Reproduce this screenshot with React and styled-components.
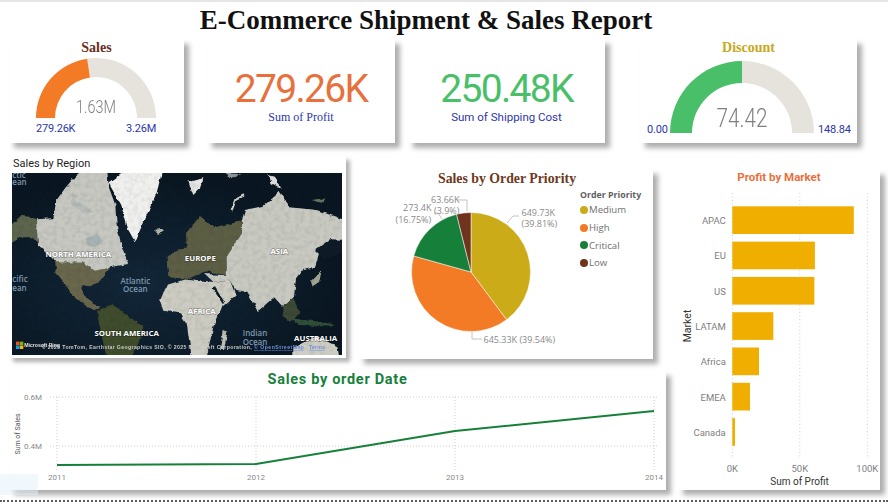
import React from 'react';
import styled, { createGlobalStyle } from 'styled-components';

const GlobalStyle = createGlobalStyle`
  html, body {
    margin: 0;
    padding: 0;
    background: #ffffff;
  }
`;

const din = `"Roboto", "Liberation Sans", sans-serif`;
const serif = `"Liberation Serif", "DejaVu Serif", serif`;

const Page = styled.div`
  width: 888px;
  height: 504px;
  box-sizing: border-box;
  overflow: hidden;
  position: relative;
  display: flex;
  flex-direction: column;
  background: #ffffff;
  border-top: 2px solid #e6e6e6;
`;

const Title = styled.h1`
  margin: 0;
  height: 37px;
  width: 852px;
  text-align: center;
  font-family: ${serif};
  font-size: 27px;
  font-weight: 700;
  line-height: 36px;
  color: #111111;
  white-space: nowrap;
`;

const KpiRow = styled.div`
  display: flex;
  height: 104px;
  padding-left: 9px;
`;

const Card = styled.div`
  background: #ffffff;
  box-shadow: 5px 5px 5px rgba(0, 0, 0, 0.32);
  box-sizing: border-box;
`;

const GaugeCard = styled(Card)`
  position: relative;
  width: ${(p) => p.$width}px;
  margin-left: ${(p) => p.$gap || 0}px;
  display: flex;
  flex-direction: column;
  align-items: center;
  text-align: center;
`;

const GaugeTitle = styled.div`
  font-family: ${serif};
  font-size: 14px;
  font-weight: 700;
  line-height: 16px;
  margin-top: 1px;
  color: ${(p) => p.$color};
`;

const GaugeBody = styled.div`
  position: relative;
  display: flex;
  justify-content: center;
  margin-top: ${(p) => p.$top}px;
  margin-right: ${(p) => p.$shift}px;
`;

const GaugeValue = styled.div`
  position: absolute;
  left: 0;
  right: 0;
  bottom: ${(p) => p.$bottom}px;
  font-family: ${din};
  font-weight: 300;
  font-size: ${(p) => p.$size}px;
  transform: scaleX(0.8);
  color: #7f7f7f;
`;

const GaugeEnd = styled.div`
  position: absolute;
  font-family: ${din};
  font-size: 11px;
  line-height: 12px;
  letter-spacing: -0.2px;
  color: #2b36ae;
  left: ${(p) => p.$left}px;
  top: ${(p) => p.$top}px;
  white-space: nowrap;
`;

const KpiCard = styled(Card)`
  width: ${(p) => p.$width}px;
  margin-left: ${(p) => p.$gap}px;
  display: flex;
  flex-direction: column;
  align-items: center;
  padding-top: 27px;
`;

const KpiValue = styled.div`
  font-family: ${din};
  font-size: 39px;
  line-height: 46px;
  letter-spacing: -1.7px;
  color: ${(p) => p.$color};
`;

const KpiLabel = styled.div`
  font-family: ${(p) => (p.$din ? din : serif)};
  font-size: ${(p) => (p.$din ? 11.5 : 12)}px;
  line-height: 14px;
  margin-top: -2px;
  color: #2b36ae;
`;

const Body = styled.div`
  display: flex;
  padding-left: 9px;
`;

const LeftColumn = styled.div`
  width: 657px;
  display: flex;
  flex-direction: column;
`;

const TopCharts = styled.div`
  display: flex;
  align-items: flex-start;
  height: 228px;
`;

const MapCard = styled(Card)`
  width: 337px;
  height: 202px;
  margin-top: 13px;
  padding: 0 4px 0 3px;
  box-shadow: 4px 4px 4px rgba(0, 0, 0, 0.3);
`;

const MapTitle = styled.div`
  height: 17px;
  padding-left: 1px;
  font-family: ${din};
  font-size: 11px;
  line-height: 15px;
  color: #252423;
`;

const MapFrame = styled.svg`
  display: block;
  width: 330px;
  height: 182px;
`;

const PieCard = styled(Card)`
  width: 294px;
  height: 190px;
  margin: 26px 0 0 13px;
`;

const PieTitle = styled.div`
  height: 22px;
  width: 296px;
  text-align: center;
  font-family: ${serif};
  font-size: 13.8px;
  font-weight: 700;
  line-height: 20px;
  color: #6e3820;
`;

const PieRow = styled.div`
  display: flex;
`;

const PieSvg = styled.svg`
  display: block;
  width: 217px;
  height: 168px;
`;

const Legend = styled.div`
  display: flex;
  flex-direction: column;
  margin: -2px 0 0 4px;
`;

const LegendTitle = styled.div`
  font-family: "Open Sans", sans-serif;
  font-size: 8.8px;
  font-weight: 700;
  line-height: 12px;
  color: #5f5f5f;
`;

const LegendItem = styled.div`
  display: flex;
  align-items: center;
  gap: 1px;
  height: 17.7px;
  font-family: "Open Sans", sans-serif;
  font-size: 9.6px;
  color: #6f6f6f;
`;

const LegendDot = styled.span`
  width: 8px;
  height: 8px;
  border-radius: 50%;
  background: ${(p) => p.$color};
`;

const LineCard = styled(Card)`
  height: 119px;
`;

const LineTitle = styled.div`
  text-align: center;
  font-family: ${din};
  font-weight: 700;
  font-size: 14.5px;
  letter-spacing: 0.7px;
  line-height: 17px;
  height: 17px;
  color: #16803a;
`;

const LineSvg = styled.svg`
  display: block;
  width: 657px;
  height: 102px;
`;

const BarCard = styled(Card)`
  width: 202px;
  height: 320px;
  margin: 27px 0 0 12px;
`;

const BarTitle = styled.div`
  text-align: center;
  font-family: ${din};
  font-weight: 700;
  font-size: 11.5px;
  line-height: 14px;
  height: 18px;
  color: #e8703c;
`;

const BarSvg = styled.svg`
  display: block;
  width: 202px;
  height: 302px;
`;

const DottedRule = styled.div`
  position: absolute;
  left: 0;
  right: 0;
  bottom: 2px;
  border-bottom: 2px dotted #5c5c5c;
`;

const CornerTint = styled.div`
  position: absolute;
  left: 0;
  top: 472px;
  width: 38px;
  height: 21px;
  background: rgba(225, 242, 250, 0.5);
`;

// half ring of a gauge, from fraction a to fraction b measured from the left end
const ring = (cx, cy, R, r, a, b) => {
  const pt = (rad, f) => [
    (cx - rad * Math.cos(Math.PI * f)).toFixed(2),
    (cy - rad * Math.sin(Math.PI * f)).toFixed(2),
  ];
  const [x1, y1] = pt(R, a);
  const [x2, y2] = pt(R, b);
  const [x3, y3] = pt(r, b);
  const [x4, y4] = pt(r, a);
  return `M${x1} ${y1}A${R} ${R} 0 0 1 ${x2} ${y2}L${x3} ${y3}A${r} ${r} 0 0 0 ${x4} ${y4}Z`;
};

const Gauge = ({ R, r, split, color }) => (
  <svg width={R * 2} height={R} viewBox={`0 0 ${R * 2} ${R}`} style={{ display: 'block' }}>
    <path d={ring(R, R, R, r, split, 1)} fill="#e6e2dc" />
    <path d={ring(R, R, R, r, 0, split)} fill={color} />
  </svg>
);

const WorldMap = () => (
  <MapFrame viewBox="36 69 990 546">
    <defs>
      {/* rough coastlines, then the soft look of a scaled map tile */}
      <filter id="coast" x="-5%" y="-5%" width="110%" height="110%" colorInterpolationFilters="sRGB">
        <feTurbulence type="fractalNoise" baseFrequency="0.05" numOctaves="3" seed="4" result="noise" />
        <feDisplacementMap in="SourceGraphic" in2="noise" scale="12" xChannelSelector="R" yChannelSelector="G" />
        <feGaussianBlur stdDeviation="1.8" />
      </filter>
      <filter id="mottle" x="0" y="0" width="100%" height="100%" colorInterpolationFilters="sRGB">
        <feTurbulence type="fractalNoise" baseFrequency="0.07" numOctaves="3" seed="11" />
        <feColorMatrix values="0 0 0 0 0  0 0 0 0 0  0 0 0 0 0  1.1 0 0 0 -0.42" />
        <feGaussianBlur stdDeviation="1.5" />
      </filter>
      <filter id="tiny" x="-2%" y="-20%" width="104%" height="140%">
        <feGaussianBlur stdDeviation="1" />
      </filter>
      <radialGradient id="sea" cx="40%" cy="62%" r="60%">
        <stop offset="0" stopColor="#132739" />
        <stop offset="0.5" stopColor="#0e1f2e" />
        <stop offset="1" stopColor="#0a1722" />
      </radialGradient>
    </defs>
    <rect x="36" y="69" width="990" height="546" fill="url(#sea)" />
    <g filter="url(#coast)">
      {/* Alaska */}
      <path d="M30 228L62 198L90 200L112 210V282L98 262L62 262L30 282Z" fill="#5d654e" />
      {/* USA, Mexico, Central America */}
      <path d="M165 335L250 338L285 360L335 348L315 372L300 392L272 412L250 405L243 412L252 435L280 462L302 470L285 482L250 462L215 432L190 395L170 370Z" fill="#69674c" />
      {/* Canada */}
      <path d="M108 208L160 205L170 150L195 115L228 76L245 64H322L326 110L346 165L350 225L364 285L384 342L330 352L285 362L250 338L170 337L114 287Z" fill="#c6c8c1" />
      <path d="M258 265L290 250L308 275L285 292L260 288Z" fill="#a9b2b3" />
      <path d="M215 130L235 138L228 152L258 168L280 188L258 195L232 175L210 160Z" fill="#b7bcb9" />
      {/* Greenland */}
      <path d="M326 100L372 66H486L470 128L440 195L405 275L385 240L364 165Z" fill="#f0f0ee" />
      <path d="M462 240L478 234L492 244L476 254Z" fill="#b3b5a6" />
      {/* Europe */}
      <path d="M505 382L500 322L530 300L560 295L558 250L600 198L640 232L726 214L726 250L680 320L680 376L620 364L562 386Z" fill="#5d5f45" />
      {/* Africa and Arabia */}
      <path d="M480 452L500 405L560 386L640 396L690 392L708 438L672 468L655 490L640 530L620 622H575L560 520L540 490L490 482Z" fill="#cdccc3" />
      <path d="M638 415L668 462L676 460L645 412Z" fill="#0f1f2c" />
      {/* Asia */}
      <path d="M726 214L735 180L790 168L840 125L870 172L950 180L1040 212V266L965 285L945 350L905 362L888 385L882 440L850 472L822 442L775 482L742 425L706 420L690 392L640 396L615 372L680 376L680 320L726 250Z" fill="#c8c9c0" />
      <path d="M945 300L990 268L1040 270V300L975 330Z" fill="#0f1c28" />
      <path d="M930 395L965 360L958 395L935 410Z" fill="#a5a896" />
      <path d="M850 470L880 445L900 490L870 515L845 495Z" fill="#3e4a35" />
      {/* Islands */}
      <path d="M870 505L960 515L1010 525L990 530L900 525Z" fill="#2f4f36" />
      <path d="M668 540L682 545L672 600L660 600Z" fill="#c2c1b6" />
      <path d="M880 595L950 558L1012 590L1018 622H880Z" fill="#cfcec4" />
      {/* South America */}
      <path d="M290 482L340 465L398 510L430 530L412 590L392 622H320L302 545Z" fill="#3f4d2c" />
      {/* Arctic */}
      <path d="M695 180L706 150L732 136" fill="none" stroke="#cfd2cc" strokeWidth="7" />
      <path d="M565 95L610 85L600 115L580 135Z" fill="#e6e6e4" />
      <path d="M670 70L725 72L690 85Z" fill="#90979a" />
      <path d="M805 75L825 80L842 115L815 100Z" fill="#d9dcdc" />
      <path d="M935 150L975 145L970 160Z" fill="#6b7260" />
    </g>
    <rect x="36" y="69" width="990" height="546" filter="url(#mottle)" opacity="0.14" />
    <g
      fontFamily='"Open Sans", sans-serif'
      fontWeight="700"
      fill="#ffffff"
      stroke="rgba(0, 0, 0, 0.28)"
      strokeWidth="4"
      paintOrder="stroke"
      textAnchor="middle"
      fontSize="23.5"
    >
      <text x="235" y="320">NORTH AMERICA</text>
      <text x="601" y="332">EUROPE</text>
      <text x="838" y="311">ASIA</text>
      <text x="605" y="491">AFRICA</text>
      <text x="380" y="557">SOUTH AMERICA</text>
      <text x="947" y="573">AUSTRALIA</text>
    </g>
    <g fontFamily='"Open Sans", sans-serif' fontWeight="600" fill="#7d97ad" textAnchor="middle" fontSize="24">
      <text x="406" y="401">Atlantic</text>
      <text x="406" y="426">Ocean</text>
      <text x="765" y="559">Indian</text>
      <text x="765" y="585">Ocean</text>
    </g>
    <g fontFamily='"Open Sans", sans-serif' fontWeight="600" fill="#7d97ad" fontSize="24">
      <text x="37" y="84">ctic</text>
      <text x="37" y="106">ean</text>
      <text x="37" y="397">cific</text>
      <text x="37" y="423">ean</text>
    </g>
    <rect x="48" y="575" width="10.5" height="10.5" fill="#f25022" />
    <rect x="59.5" y="575" width="10.5" height="10.5" fill="#7fba00" />
    <rect x="48" y="586.5" width="10.5" height="10.5" fill="#00a4ef" />
    <rect x="59.5" y="586.5" width="10.5" height="10.5" fill="#ffb900" />
    <g fontFamily='"Liberation Sans", sans-serif' fontSize="15.5" filter="url(#tiny)" fontWeight="700">
      <text x="73" y="590" fill="#e4e4e4" textLength="107">Microsoft Bing</text>
      <text x="125" y="597" fill="#c8c8c8" textLength="630">© 2025 TomTom, Earthstar Geographics SIO, © 2025 Microsoft Corporation,</text>
      <text x="762" y="597" fill="#6d8fdc" textLength="150" textDecoration="underline">© OpenStreetMap</text>
      <text x="927" y="597" fill="#6d8fdc" textLength="48" textDecoration="underline">Terms</text>
    </g>
  </MapFrame>
);

const slices = [
  { name: 'Medium', share: 39.81, color: '#ccab18' },
  { name: 'High', share: 39.54, color: '#f47b26' },
  { name: 'Critical', share: 16.75, color: '#16803a' },
  { name: 'Low', share: 3.9, color: '#6f341d' },
];

const PieChart = () => {
  const cx = 471;
  const cy = 272;
  const R = 59.5;
  let start = 0;
  const paths = slices.map((s) => {
    const end = start + s.share / 100;
    const p = (f) => [
      (cx + R * Math.sin(2 * Math.PI * f)).toFixed(2),
      (cy - R * Math.cos(2 * Math.PI * f)).toFixed(2),
    ];
    const [x1, y1] = p(start);
    const [x2, y2] = p(end);
    const large = end - start > 0.5 ? 1 : 0;
    start = end;
    return {
      color: s.color,
      d: `M${cx} ${cy}L${x1} ${y1}A${R} ${R} 0 ${large} 1 ${x2} ${y2}Z`,
    };
  });
  return (
    <PieSvg viewBox="359 191 217 168">
      {paths.map((p) => (
        <path key={p.color} d={p.d} fill={p.color} stroke="#ffffff" strokeWidth="0.5" />
      ))}
      <g fill="none" stroke="#b5b5b5" strokeWidth="0.8">
        <path d="M507 223L513 216H519" />
        <path d="M472 332V339H482" />
        <path d="M457 200H467V211" />
        <path d="M434 213H438L442 219" />
      </g>
      <g fontFamily='"Open Sans", sans-serif' fontSize="9" fill="#8a8a8a">
        <text x="521.5" y="216">649.73K</text>
        <text x="521.5" y="227">(39.81%)</text>
        <text x="483.5" y="343">645.33K (39.54%)</text>
        <text x="403" y="211">273.4K</text>
        <text x="395.5" y="223">(16.75%)</text>
        <text x="431" y="203">63.66K</text>
        <text x="434" y="214">(3.9%)</text>
      </g>
    </PieSvg>
  );
};

const linePoints = [
  { year: '2011', x: 57, y: 465 },
  { year: '2012', x: 256, y: 464 },
  { year: '2013', x: 455, y: 431 },
  { year: '2014', x: 654, y: 411 },
];

const LineChart = () => (
  <LineSvg viewBox="9 388 657 102">
    <g stroke="#cfcfcf" strokeWidth="1" strokeDasharray="1 2">
      <path d="M50 397H658M50 446H658" />
      {linePoints.map((p) => (
        <path key={p.year} d={`M${p.x} 397V470`} />
      ))}
    </g>
    <polyline
      points={linePoints.map((p) => `${p.x},${p.y}`).join(' ')}
      fill="none"
      stroke="#16803a"
      strokeWidth="2"
    />
    <g fontFamily='"Roboto", sans-serif' fontSize="8" fill="#8a8a8a">
      <text x="42" y="400" textAnchor="end">0.6M</text>
      <text x="42" y="449" textAnchor="end">0.4M</text>
      {linePoints.map((p) => (
        <text key={p.year} x={p.x} y="480" textAnchor="middle">{p.year}</text>
      ))}
    </g>
    <text
      transform="translate(20 434) rotate(-90)"
      textAnchor="middle"
      fontFamily='"Roboto", sans-serif'
      fontSize="7"
      fill="#555555"
    >
      Sum of Sales
    </text>
  </LineSvg>
);

const markets = [
  { name: 'APAC', value: 90 },
  { name: 'EU', value: 61.2 },
  { name: 'US', value: 60.8 },
  { name: 'LATAM', value: 30.4 },
  { name: 'Africa', value: 19.8 },
  { name: 'EMEA', value: 13.1 },
  { name: 'Canada', value: 2 },
];

const BarChart = () => {
  const x0 = 732.3;
  const perUnit = 1.35;
  return (
    <BarSvg viewBox="678 188 202 302">
      <g stroke="#cfcfcf" strokeWidth="1" strokeDasharray="1 2.5">
        <path d="M732.3 193V458M799.8 193V458M867.3 193V458" />
      </g>
      {markets.map((m, i) => (
        <g key={m.name}>
          <rect x={x0} y={206.3 + i * 35.3} width={m.value * perUnit} height="27.7" fill="#f0af00" />
          <text
            x="725.8"
            y={224 + i * 35.3}
            textAnchor="end"
            fontFamily='"Roboto", sans-serif'
            fontSize="9.5"
            fill="#808080"
          >
            {m.name}
          </text>
        </g>
      ))}
      <g fontFamily='"Roboto", sans-serif' fontSize="9.5" fill="#808080" textAnchor="middle">
        <text x="732.3" y="471.5">0K</text>
        <text x="799.8" y="471.5">50K</text>
        <text x="867.3" y="471.5">100K</text>
      </g>
      <text x="799.5" y="484.5" textAnchor="middle" fontFamily='"Roboto", sans-serif' fontSize="10" fill="#333333">
        Sum of Profit
      </text>
      <text
        transform="translate(691 326) rotate(-90)"
        textAnchor="middle"
        fontFamily='"Roboto", sans-serif'
        fontSize="10.5"
        fill="#333333"
      >
        Market
      </text>
    </BarSvg>
  );
};

const App = () => (
  <Page>
    <GlobalStyle />
    <Title>E-Commerce Shipment &amp; Sales Report</Title>
    <KpiRow>
      <GaugeCard $width={175}>
        <GaugeTitle $color="#6b2f1c">Sales</GaugeTitle>
        <GaugeBody $top={2} $shift={1}>
          <Gauge R={60} r={41} split={0.453} color="#f47b26" />
          <GaugeValue $bottom={1} $size={18}>1.63M</GaugeValue>
        </GaugeBody>
        <GaugeEnd $left={27} $top={84}>279.26K</GaugeEnd>
        <GaugeEnd $left={117} $top={84}>3.26M</GaugeEnd>
      </GaugeCard>
      <KpiCard $width={188} $gap={23}>
        <KpiValue $color="#e8703c">279.26K</KpiValue>
        <KpiLabel>Sum of Profit</KpiLabel>
      </KpiCard>
      <KpiCard $width={197} $gap={13}>
        <KpiValue $color="#4abf6a">250.48K</KpiValue>
        <KpiLabel $din>Sum of Shipping Cost</KpiLabel>
      </KpiCard>
      <GaugeCard $width={217} $gap={35}>
        <GaugeTitle $color="#c9a81c">Discount</GaugeTitle>
        <GaugeBody $top={5} $shift={13}>
          <Gauge R={72} r={50} split={0.5} color="#4abf6a" />
          <GaugeValue $bottom={0} $size={26}>74.42</GaugeValue>
        </GaugeBody>
        <GaugeEnd $left={7} $top={85}>0.00</GaugeEnd>
        <GaugeEnd $left={178} $top={85}>148.84</GaugeEnd>
      </GaugeCard>
    </KpiRow>
    <Body>
      <LeftColumn>
        <TopCharts>
          <MapCard>
            <MapTitle>Sales by Region</MapTitle>
            <WorldMap />
          </MapCard>
          <PieCard>
            <PieTitle>Sales by Order Priority</PieTitle>
            <PieRow>
              <PieChart />
              <Legend>
                <LegendTitle>Order Priority</LegendTitle>
                {slices.map((s) => (
                  <LegendItem key={s.name}>
                    <LegendDot $color={s.color} />
                    {s.name}
                  </LegendItem>
                ))}
              </Legend>
            </PieRow>
          </PieCard>
        </TopCharts>
        <LineCard>
          <LineTitle>Sales by order Date</LineTitle>
          <LineChart />
        </LineCard>
      </LeftColumn>
      <BarCard>
        <BarTitle>Profit by Market</BarTitle>
        <BarChart />
      </BarCard>
    </Body>
    <DottedRule />
    <CornerTint />
  </Page>
);

export default App;
